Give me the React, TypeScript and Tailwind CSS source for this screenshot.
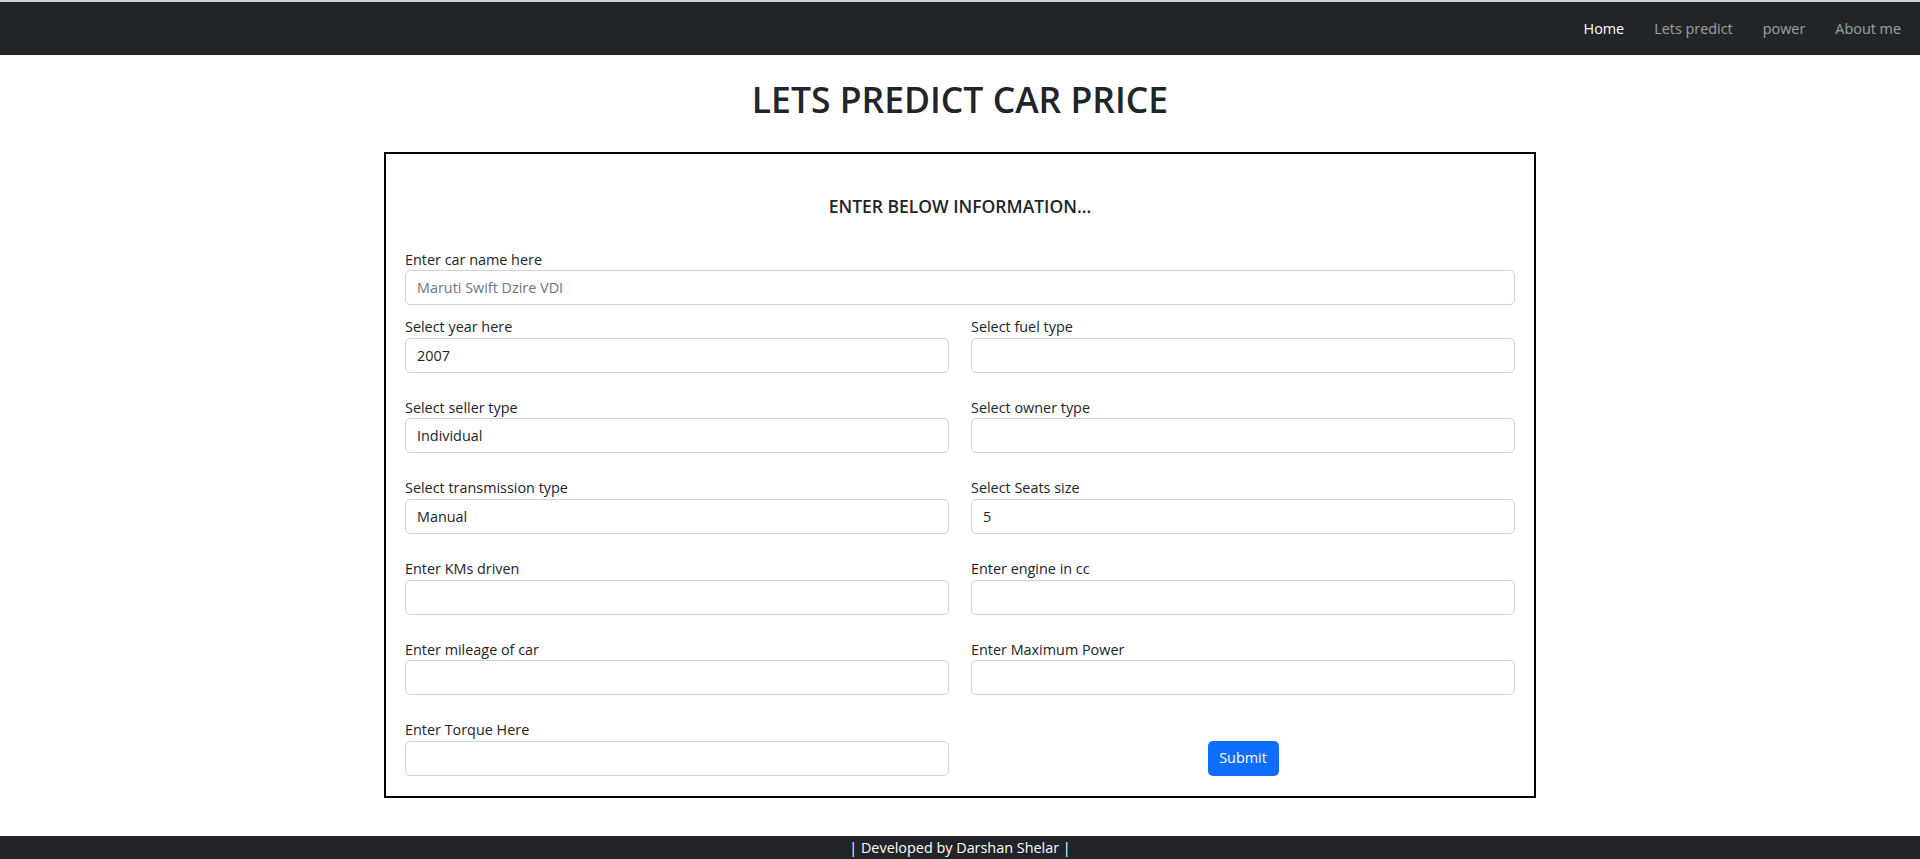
import React from "react";

const font = { fontFamily: '"Open Sans", "Noto Sans", Arial, sans-serif' };

type FieldProps = {
  label: string;
  value?: string;
  placeholder?: string;
};

const Field = ({ label, value, placeholder }: FieldProps) => {
  return (
    <div className="flex flex-col">
      <label className="text-[14.4px] leading-[21.6px] text-[#212529]">{label}</label>
      <input
        readOnly
        value={value ?? ""}
        placeholder={placeholder}
        className="h-[35px] w-full rounded-[5px] border border-[#ced4da] bg-white px-[11px] text-[14.4px] text-[#212529] outline-none placeholder:text-[#6c757d]"
      />
    </div>
  );
};

export default function App() {
  return (
    <div className="flex min-h-[859px] flex-col bg-white" style={font}>
      {/* navbar */}
      <nav className="h-[55px] border-t-2 border-[#cfd0d4] bg-[#212529]">
        <ul className="flex h-full items-center justify-end gap-[30px] pr-[19px] text-[14.4px]">
          <li className="text-white">Home</li>
          <li className="text-white/55">Lets predict</li>
          <li className="text-white/55">power</li>
          <li className="text-white/55">About me</li>
        </ul>
      </nav>

      <h1 className="mt-[23px] text-center text-[35.5px] font-semibold leading-[43px] text-[#212529]">
        LETS PREDICT CAR PRICE
      </h1>

      <div className="mx-auto mt-[31px] w-[60%] border-2 border-black px-[19px] pb-[20px] pt-[42px]">
        <h5 className="mb-[31px] text-center text-[17.5px] font-semibold leading-[21.6px] text-[#212529]">
          ENTER BELOW INFORMATION...
        </h5>

        <div className="mb-[11px]">
          <Field label="Enter car name here" placeholder="Maruti Swift Dzire VDI" />
        </div>

        <div className="grid grid-cols-2 gap-x-[22px] gap-y-[24px]">
          <Field label="Select year here" value="2007" />
          <Field label="Select fuel type" />
          <Field label="Select seller type" value="Individual" />
          <Field label="Select owner type" />
          <Field label="Select transmission type" value="Manual" />
          <Field label="Select Seats size" value="5" />
          <Field label="Enter KMs driven" />
          <Field label="Enter engine in cc" />
          <Field label="Enter mileage of car" />
          <Field label="Enter Maximum Power" />
          <Field label="Enter Torque Here" />
          <div className="flex items-end justify-center">
            <button className="h-[35px] w-[71px] rounded-[5px] bg-[#0d6efd] text-[14.4px] text-white">
              Submit
            </button>
          </div>
        </div>
      </div>

      <footer className="mt-auto h-[23px] bg-[#212529] text-center text-[14.4px] leading-[23px] text-white">
        | Developed by Darshan Shelar |
      </footer>
    </div>
  );
}
